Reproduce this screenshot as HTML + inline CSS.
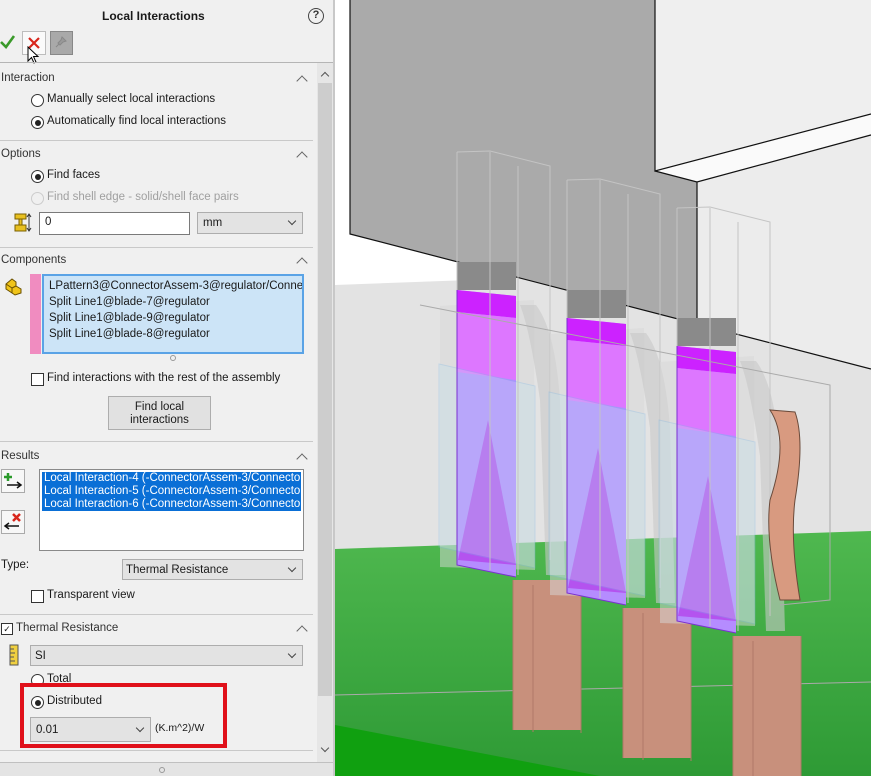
<!DOCTYPE html>
<html><head><meta charset="utf-8"><style>
*{margin:0;padding:0;box-sizing:border-box}
body{width:871px;height:776px;overflow:hidden;position:relative;background:#f0f0f0;font-family:"Liberation Sans",sans-serif;font-size:11.5px;color:#1a1a1a}
.a{position:absolute;white-space:nowrap}
.hdr{font-weight:normal;color:#333}
.sep{position:absolute;left:0;width:313px;height:1px;background:#c9c9c9}
.chev{position:absolute;left:298px;width:8px;height:8px;border-left:1.5px solid #666;border-top:1.5px solid #666;transform:rotate(45deg)}
.rad{position:absolute;width:13px;height:13px;border:1px solid #333;border-radius:50%;background:#fff}
.rad.on::after{content:"";position:absolute;left:2.5px;top:2.5px;width:6px;height:6px;border-radius:50%;background:#222}
.cb{position:absolute;width:13px;height:13px;border:1px solid #333;background:#fff}
.sel{position:absolute;background:#e3e3e3;border:1px solid #adadad}
.sel .v{position:absolute;right:7px;top:5px;width:6px;height:6px;border-right:1.3px solid #444;border-bottom:1.3px solid #444;transform:rotate(45deg)}
</style></head><body>
<div class="a" style="left:102px;top:9px;font-weight:bold;font-size:12px">Local Interactions</div>
<div class="a" style="left:308px;top:8px;width:16px;height:16px;border:1.5px solid #444;border-radius:50%;text-align:center;font-weight:bold;font-size:11px;line-height:13px;color:#333">?</div>
<svg class="a" style="left:0;top:34px" width="16" height="16"><path d="M1 8 L6 13 L14 2" stroke="#3a9a2a" stroke-width="2.6" fill="none"/></svg>
<div class="a" style="left:22px;top:31px;width:24px;height:24px;border:1px solid #bdbdbd;background:#fafafa"></div>
<svg class="a" style="left:27px;top:36px" width="14" height="14"><path d="M2 2L12 12M12 2L2 12" stroke="#d8261c" stroke-width="2.2"/></svg>
<svg class="a" style="left:27px;top:46px" width="14" height="20"><path d="M1 1 L1 15 L4.5 11.5 L7 17 L9 16 L6.5 10.5 L11 10.5 Z" fill="#fff" stroke="#000" stroke-width="1"/></svg>
<div class="a" style="left:50px;top:31px;width:23px;height:24px;border:1px solid #888;background:#a9a9a9"></div>
<svg class="a" style="left:55px;top:36px" width="12" height="12"><path d="M7 1 L11 5 L8 6 L5 9 L3 7 L6 4 Z M4 8 L1 11" stroke="#888" fill="#999"/></svg>
<div class="a" style="left:0;top:62px;width:333px;height:1px;background:#b5b5b5"></div>
<div class="a" style="left:317px;top:63px;width:17px;height:699px;background:#e6e6e6"></div>
<div class="a" style="left:318px;top:83px;width:14px;height:613px;background:#cdcdcd"></div>
<div class="a" style="left:322px;top:73px;width:6px;height:6px;border-left:1.5px solid #555;border-top:1.5px solid #555;transform:rotate(45deg)"></div>
<div class="a" style="left:322px;top:745px;width:6px;height:6px;border-right:1.5px solid #555;border-bottom:1.5px solid #555;transform:rotate(45deg)"></div>
<div class="a" style="left:0;top:762px;width:334px;height:14px;background:#e4e4e4;border-top:1px solid #c0c0c0"></div>
<div class="a" style="left:159px;top:767px;width:6px;height:6px;border-radius:50%;border:1px solid #999"></div>
<div class="a" style="left:333px;top:0;width:2px;height:776px;background:#c8c8c8"></div>

<div class="a hdr" style="left:1px;top:72px">Interaction</div><div class="chev" style="top:77px"></div>
<div class="rad" style="left:31px;top:94px"></div><div class="a" style="left:47px;top:93px">Manually select local interactions</div>
<div class="rad on" style="left:31px;top:116px"></div><div class="a" style="left:47px;top:115px">Automatically find local interactions</div>
<div class="sep" style="top:140px"></div>
<div class="a hdr" style="left:1px;top:148px">Options</div><div class="chev" style="top:153px"></div>
<div class="rad on" style="left:31px;top:170px"></div><div class="a" style="left:47px;top:169px">Find faces</div>
<div class="rad" style="left:31px;top:192px;border-color:#ccc;background:#f0f0f0"></div><div class="a" style="left:47px;top:191px;color:#a0a0a0">Find shell edge - solid/shell face pairs</div>
<svg class="a" style="left:14px;top:212px" width="20" height="22"><rect x="1" y="2" width="11" height="5" fill="#e8c020" stroke="#7a6000"/><rect x="5" y="7" width="3" height="6" fill="#e8c020" stroke="#7a6000"/><rect x="1" y="13" width="11" height="6" fill="#e8c020" stroke="#7a6000"/><path d="M15 2V19M13 5L15 2L17 5M13 16L15 19L17 16" stroke="#333" fill="none"/></svg>
<div class="a" style="left:39px;top:212px;width:151px;height:23px;background:#fff;border:1px solid #7a7a7a;padding:3px 5px">0</div>
<div class="sel" style="left:197px;top:212px;width:106px;height:22px;padding:4px 5px">mm<div class="v"></div></div>
<div class="sep" style="top:247px"></div>
<div class="a hdr" style="left:1px;top:254px">Components</div><div class="chev" style="top:259px"></div>
<svg class="a" style="left:4px;top:276px" width="20" height="20"><path d="M2 8 L8 3 L12 6 L12 10 L17 13 L17 17 L11 19 L2 13 Z" fill="#f0c419" stroke="#6a5000"/><path d="M2 8 L8 12 L8 17 M8 12 L12 10" stroke="#6a5000" fill="none"/></svg>
<div class="a" style="left:30px;top:274px;width:11px;height:80px;background:#f08cc0"></div>
<div class="a" style="left:42px;top:274px;width:262px;height:80px;background:#cce4f7;border:2px solid #5aa3e6;overflow:hidden;padding:2px 0 0 5px;line-height:16px">LPattern3@ConnectorAssem-3@regulator/Connector<br>Split Line1@blade-7@regulator<br>Split Line1@blade-9@regulator<br>Split Line1@blade-8@regulator</div>
<div class="a" style="left:170px;top:355px;width:6px;height:6px;border-radius:50%;border:1px solid #999"></div>
<div class="cb" style="left:31px;top:373px"></div><div class="a" style="left:47px;top:372px">Find interactions with the rest of the assembly</div>
<div class="a" style="left:108px;top:396px;width:103px;height:34px;background:#e1e1e1;border:1px solid #adadad;text-align:center;line-height:13px;padding-top:4px">Find local<br>interactions</div>
<div class="sep" style="top:441px"></div>
<div class="a hdr" style="left:1px;top:450px">Results</div><div class="chev" style="top:455px"></div>
<div class="a" style="left:1px;top:469px;width:24px;height:24px;border:1px solid #aaa;background:#f7f7f7"></div>
<svg class="a" style="left:3px;top:471px" width="20" height="20"><path d="M5 2V10M1 6H9" stroke="#2a9a2a" stroke-width="2.5"/><path d="M4 14H18M14 11L18 14L14 17" stroke="#111" stroke-width="1.5" fill="none"/></svg>
<div class="a" style="left:1px;top:510px;width:24px;height:24px;border:1px solid #aaa;background:#f7f7f7"></div>
<svg class="a" style="left:3px;top:512px" width="20" height="20"><path d="M10 2L17 9M17 2L10 9" stroke="#d8261c" stroke-width="2.5"/><path d="M2 14H16M6 11L2 14L6 17" stroke="#111" stroke-width="1.5" fill="none"/></svg>
<div class="a" style="left:39px;top:469px;width:265px;height:82px;background:#fff;border:1px solid #8a8a8a;overflow:hidden;padding:2px"><div style="background:#0a6fd6;color:#fff;line-height:13px;padding-left:2px;white-space:nowrap">Local Interaction-4 (-ConnectorAssem-3/Connector<br>Local Interaction-5 (-ConnectorAssem-3/Connector<br>Local Interaction-6 (-ConnectorAssem-3/Connector</div></div>
<div class="a" style="left:1px;top:559px">Type:</div>
<div class="sel" style="left:122px;top:559px;width:181px;height:21px;padding:4px 3px">Thermal Resistance<div class="v"></div></div>
<div class="cb" style="left:31px;top:590px"></div><div class="a" style="left:47px;top:589px">Transparent view</div>
<div class="sep" style="top:614px"></div>
<div class="cb" style="left:1px;top:623px;width:12px;height:12px;font-size:9px;line-height:10px;text-align:center">✓</div>
<div class="a hdr" style="left:16px;top:622px">Thermal Resistance</div><div class="chev" style="top:627px"></div>
<svg class="a" style="left:9px;top:644px" width="12" height="22"><rect x="1" y="1" width="8" height="20" fill="#f0d040" stroke="#555"/><path d="M1 5H5M1 9H6M1 13H5M1 17H6" stroke="#555"/></svg>
<div class="sel" style="left:30px;top:645px;width:273px;height:21px;padding:4px 4px">SI<div class="v"></div></div>
<div class="rad" style="left:31px;top:674px"></div><div class="a" style="left:47px;top:673px">Total</div>
<div class="a" style="left:20px;top:683px;width:207px;height:65px;border:4px solid #e0101a"></div>
<div class="rad on" style="left:31px;top:696px"></div><div class="a" style="left:47px;top:695px">Distributed</div>
<div class="sel" style="left:30px;top:717px;width:121px;height:25px;padding:6px 5px">0.01<div class="v" style="top:7px"></div></div>
<div class="a" style="left:155px;top:722px;font-size:10.5px">(K.m^2)/W</div>
<div class="a" style="left:0;top:750px;width:313px;height:1px;background:#c9c9c9"></div>

<svg class="a" style="left:335px;top:0" width="536" height="776" viewBox="335 0 536 776">
<defs><linearGradient id="g" x1="0" y1="0" x2="0" y2="1"><stop offset="0" stop-color="#4fb84f"/><stop offset="1" stop-color="#2e9a35"/></linearGradient></defs>
<rect x="335" y="0" width="536" height="776" fill="#e3e3e3"/>
<path d="M335 0 L350 0 L350 234 L470 265 L470 280 L335 285Z" fill="#fff"/>
<path d="M335 549 L871 531 L871 776 L335 776Z" fill="url(#g)"/>
<path d="M335 725 L600 776 L335 776Z" fill="#10a010"/>
<path d="M335 695 L871 682" stroke="#aaa" stroke-width="1" fill="none"/>
<path d="M697 182 L871 135 L871 370 L697 324Z" fill="#ececec"/>
<path d="M655 0 L871 0 L871 114 L655 171Z" fill="#efefef"/>
<path d="M655 171 L871 114 L871 134 L697 182Z" fill="#fafafa"/>
<path d="M350 0 L655 0 L655 171 L697 182 L697 324 L350 234Z" fill="#aaaaaa"/>
<path d="M350 0 V234 L871 369 M655 0 V171 L871 114 M697 182 V324 M655 171 L697 182 L871 135" stroke="#111" stroke-width="1.2" fill="none"/>
<g id="b">
<path d="M440 306 L534 300 L535 570 L440 567Z" fill="#d8d8d8" opacity=".5"/>
<rect x="513" y="580" width="68" height="150" fill="#c8907c"/>
<path d="M513 580V730M533 585V732M581 580V733" stroke="#b07868" fill="none"/>
<path d="M536 305 Q555 330 560 400 L565 575 L546 575 L540 400 Q530 330 520 305Z" fill="#c8c8c8" opacity=".6"/>
<rect x="457" y="262" width="59" height="28" fill="#8a8a8a"/>
<path d="M457 290 L516 296 L516 577 L457 565Z" fill="#b58cff"/>
<path d="M457 290 L516 296 L516 318 L457 312Z" fill="#cc22ff"/>
<path d="M457 312 L516 318 L516 380 L457 372Z" fill="#dd77ff"/>
<path d="M458 560 L488 420 L516 565Z" fill="#b43ae8" opacity=".7"/>
<path d="M439 364 L535 386 L535 568 L439 547Z" fill="#bfe3f0" opacity=".3" stroke="#7ab8e8"/>
<path d="M457 152 L490 151 L550 166 L550 560 M457 152 V560 M490 152 V570 M518 166 V575" stroke="#c4c4c4" fill="none"/>
<path d="M457 290 V565 L516 577" stroke="#7a30d0" fill="none"/>
</g>
<use href="#b" transform="translate(110,28)"/>
<use href="#b" transform="translate(220,56)"/>
<path d="M770 410 Q790 440 770 500 Q765 540 780 600 L800 600 Q790 540 795 500 Q805 440 795 412Z" fill="#d89a80" stroke="#6a4a3a"/>
<path d="M420 305 L830 385 L830 600 L780 605" stroke="#aaa" fill="none"/>
</svg>
</body></html>
